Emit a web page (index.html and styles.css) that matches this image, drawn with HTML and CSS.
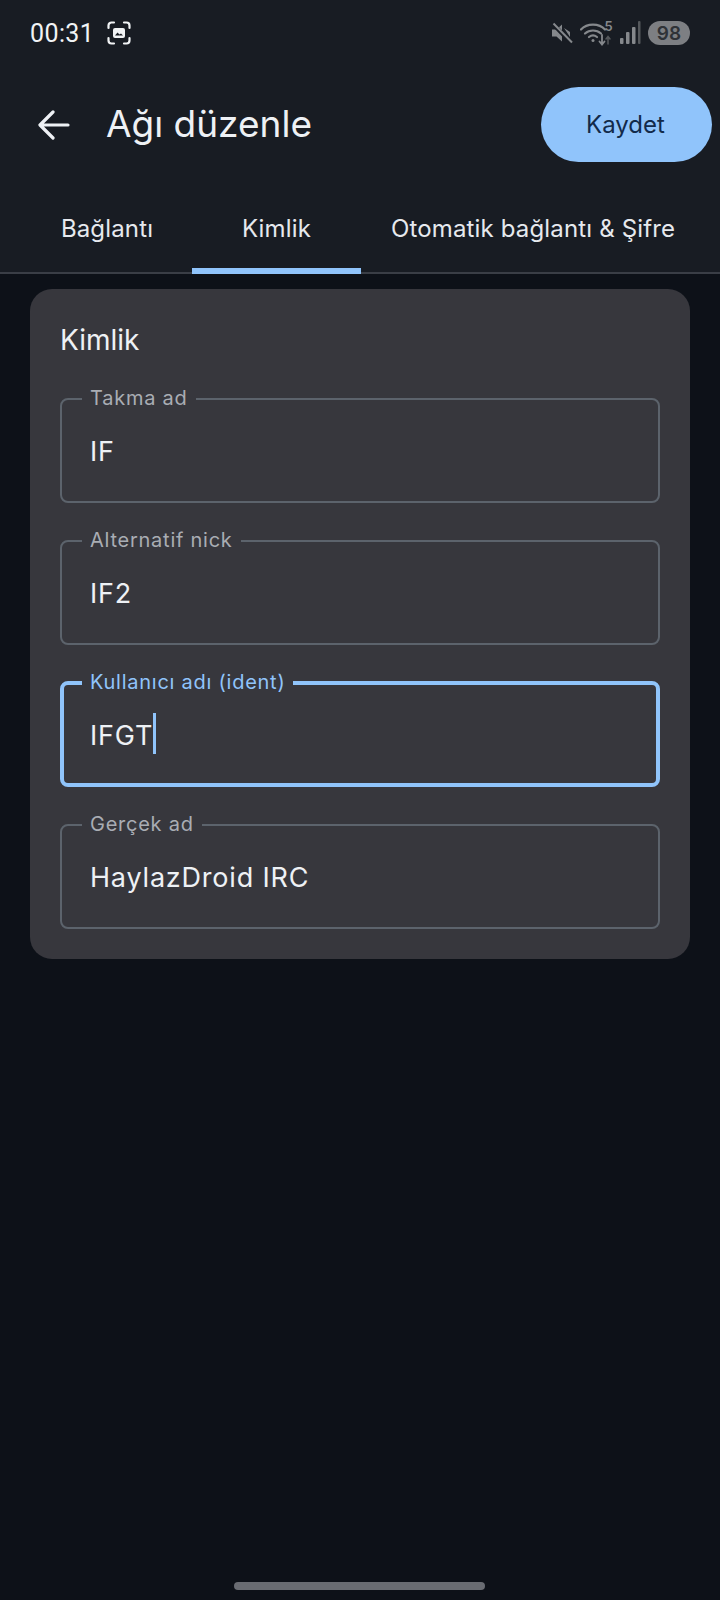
FILE: index.html
```html
<!DOCTYPE html>
<html lang="tr">
<head>
  <meta charset="UTF-8" />
  <meta name="viewport" content="width=device-width, initial-scale=1.0"/>
  <title>Ağı düzenle</title>
  <link rel="stylesheet" href="styles.css">
</head>
<body>

  <header class="top">
    <div class="status">
      <span class="time">00:31</span>
      <svg class="shot" width="24" height="24" viewBox="0 0 24 24" fill="none" stroke="#f1f3f5" stroke-width="2.2" stroke-linecap="round">
        <path d="M1.5 7V4.5a3 3 0 0 1 3-3H7M17 1.5h2.5a3 3 0 0 1 3 3V7M22.5 17v2.500a3 3 0 0 1-3 3H17M7 22.500H4.500a3 3 0 0 1-3-3V17"/>
        <rect x="6" y="7" width="12" height="10" rx="2" fill="#f1f3f5" stroke="none"/>
        <path d="M8 14.500l2.500-3 2 2 1.500-1 2 2z" fill="#181c23" stroke="none"/>
      </svg>
      <div class="status-right">
        <svg width="22" height="22" viewBox="0 0 22 22" fill="#85888c">
          <path d="M1 7.500h4.500L11 2.500v17l-5.500-5H1z"/>
          <path d="M13 6l6 4v5z"/>
          <path d="M2 2l18 19" stroke="#181c23" stroke-width="4"/>
          <path d="M2.500 1.500L21 20.500" stroke="#85888c" stroke-width="2"/>
        </svg>
        <svg class="wifi" width="33" height="30" viewBox="0 -2 33 30" fill="none" stroke="#85888c" stroke-width="2.200" stroke-linecap="round">
          <path d="M1 9.500C7 3 19 3 25 9.500"/>
          <path d="M5 13.500c4.500-4 11.500-4 16 0"/>
          <path d="M9 17c2.500-2 5.500-2 8 0"/>
          <circle cx="13" cy="20.500" r="1.500" fill="#85888c" stroke="none"/>
          <path d="M22 15v9M19.500 21.500l2.500 3 2.500-3" stroke-width="1.800"/>
          <path d="M28 24v-7M26 19l2-2.500 2 2.500" stroke="#55585c" stroke-width="1.500"/>
          <text x="24.500" y="11" class="wifi-num">5</text>
        </svg>
        <svg width="21" height="24" viewBox="0 0 21 24" fill="#85888c">
          <rect x="0" y="17" width="3.500" height="6" rx="1"/>
          <rect x="6" y="11" width="3.500" height="12" rx="1"/>
          <rect x="12" y="6" width="3.500" height="17" rx="1"/>
          <rect x="18" y="0" width="2.500" height="23" rx="1" fill="#55585c"/>
        </svg>
        <span class="battery">98</span>
      </div>
    </div>

    <div class="toolbar">
      <svg class="back" width="32" height="30" viewBox="0 0 32 30" fill="none" stroke="#eef1f5" stroke-width="3.200" stroke-linecap="round" stroke-linejoin="round">
        <path d="M30 15H3M15 2L2 15l13 13"/>
      </svg>
      <h1>Ağı düzenle</h1>
      <button class="save">Kaydet</button>
    </div>

    <nav class="tabs">
      <div class="tab">Bağlantı</div>
      <div class="tab active">Kimlik</div>
      <div class="tab wide">Otomatik bağlantı &amp; Şifre</div>
    </nav>
  </header>

  <main class="card">
    <h2>Kimlik</h2>

    <fieldset class="field">
      <legend>Takma ad</legend>
      <div class="value">IF</div>
    </fieldset>

    <fieldset class="field">
      <legend>Alternatif nick</legend>
      <div class="value">IF2</div>
    </fieldset>

    <fieldset class="field focus">
      <legend>Kullanıcı adı (ident)</legend>
      <div class="value">IFGT<span class="caret"></span></div>
    </fieldset>

    <fieldset class="field">
      <legend>Gerçek ad</legend>
      <div class="value">HaylazDroid IRC</div>
    </fieldset>
  </main>

  <div class="home-bar"></div>

</body>
</html>
```

FILE: styles.css
```css
* {
  margin: 0;
  padding: 0;
  box-sizing: border-box;
  font-family: 'Inter', 'Noto Sans', sans-serif;
}

body {
  width: 720px;
  height: 1600px;
  background: #0d1118;
  display: flex;
  flex-direction: column;
  color: #eef1f5;
  overflow: hidden;
}

.top {
  height: 274px;
  background: #181c23;
  border-bottom: 2px solid #3a3e46;
}

.status {
  height: 66px;
  padding: 0 30px;
  display: flex;
  align-items: center;
}

.time {
  font-family: 'Roboto', sans-serif;
  font-size: 25px;
  letter-spacing: 0.4px;
  color: #f1f3f5;
}

.shot {
  margin-left: 13px;
}

.status-right {
  margin-left: auto;
  display: flex;
  align-items: center;
  gap: 7px;
}

.wifi-num {
  font-family: 'Inter', sans-serif;
  font-size: 13px;
  font-weight: 600;
  fill: #85888c;
  stroke: none;
}

.battery {
  width: 42px;
  height: 24px;
  border-radius: 12px;
  background: #7d7f83;
  color: #2f3237;
  font-size: 19px;
  font-weight: 600;
  display: flex;
  align-items: center;
  justify-content: center;
}

.toolbar {
  margin-top: 21px;
  height: 75px;
  padding: 0 8px 0 38px;
  display: flex;
  align-items: center;
}

h1 {
  margin-left: 36px;
  padding-bottom: 3px;
  font-size: 37px;
  font-weight: 400;
}

.save {
  margin-left: auto;
  width: 171px;
  height: 75px;
  padding-right: 2px;
  border: none;
  border-radius: 38px;
  background: #90c4fb;
  color: #122a4a;
  font-size: 24px;
}

.tabs {
  margin-top: 25px;
  height: 85px;
  padding-left: 22px;
  display: flex;
}

.tab {
  min-width: 170px;
  height: 85px;
  padding: 0 30px 2px;
  display: flex;
  align-items: center;
  justify-content: center;
  font-size: 24px;
  letter-spacing: 0.15px;
  color: #e6e9ee;
}

.tab.active {
  min-width: 169px;
  height: 87px;
  border-bottom: 6px solid #90c4fb;
  padding: 2px 0 0;
}

.card {
  margin: 15px 30px 0;
  height: 670px;
  padding: 30px;
  border-radius: 22px;
  background: #37373d;
}

h2 {
  font-size: 28px;
  font-weight: 400;
  line-height: 42px;
  margin-bottom: 25px;
}

.field {
  height: 117px;
  margin-bottom: 25px;
  padding: 0 28px;
  border: 2px solid #5c636c;
  border-radius: 8px;
}

.field legend {
  padding: 0 8px 2px;
  margin-left: -8px;
  font-size: 20px;
  line-height: 24px;
  letter-spacing: 0.75px;
  color: #a9adb4;
}

.value {
  margin-top: 22px;
  font-size: 27px;
  line-height: 36px;
  letter-spacing: 0.8px;
}

.focus {
  border: 4px solid #90c4fb;
  padding: 0 26px;
}

.focus legend {
  color: #90c4fb;
}

.focus .value {
  margin-top: 17px;
}

.caret {
  display: inline-block;
  width: 3px;
  height: 41px;
  background: #90c4fb;
  vertical-align: -9px;
}

.home-bar {
  position: absolute;
  left: 234px;
  top: 1582px;
  width: 251px;
  height: 8px;
  border-radius: 4px;
  background: #696c72;
}
```
